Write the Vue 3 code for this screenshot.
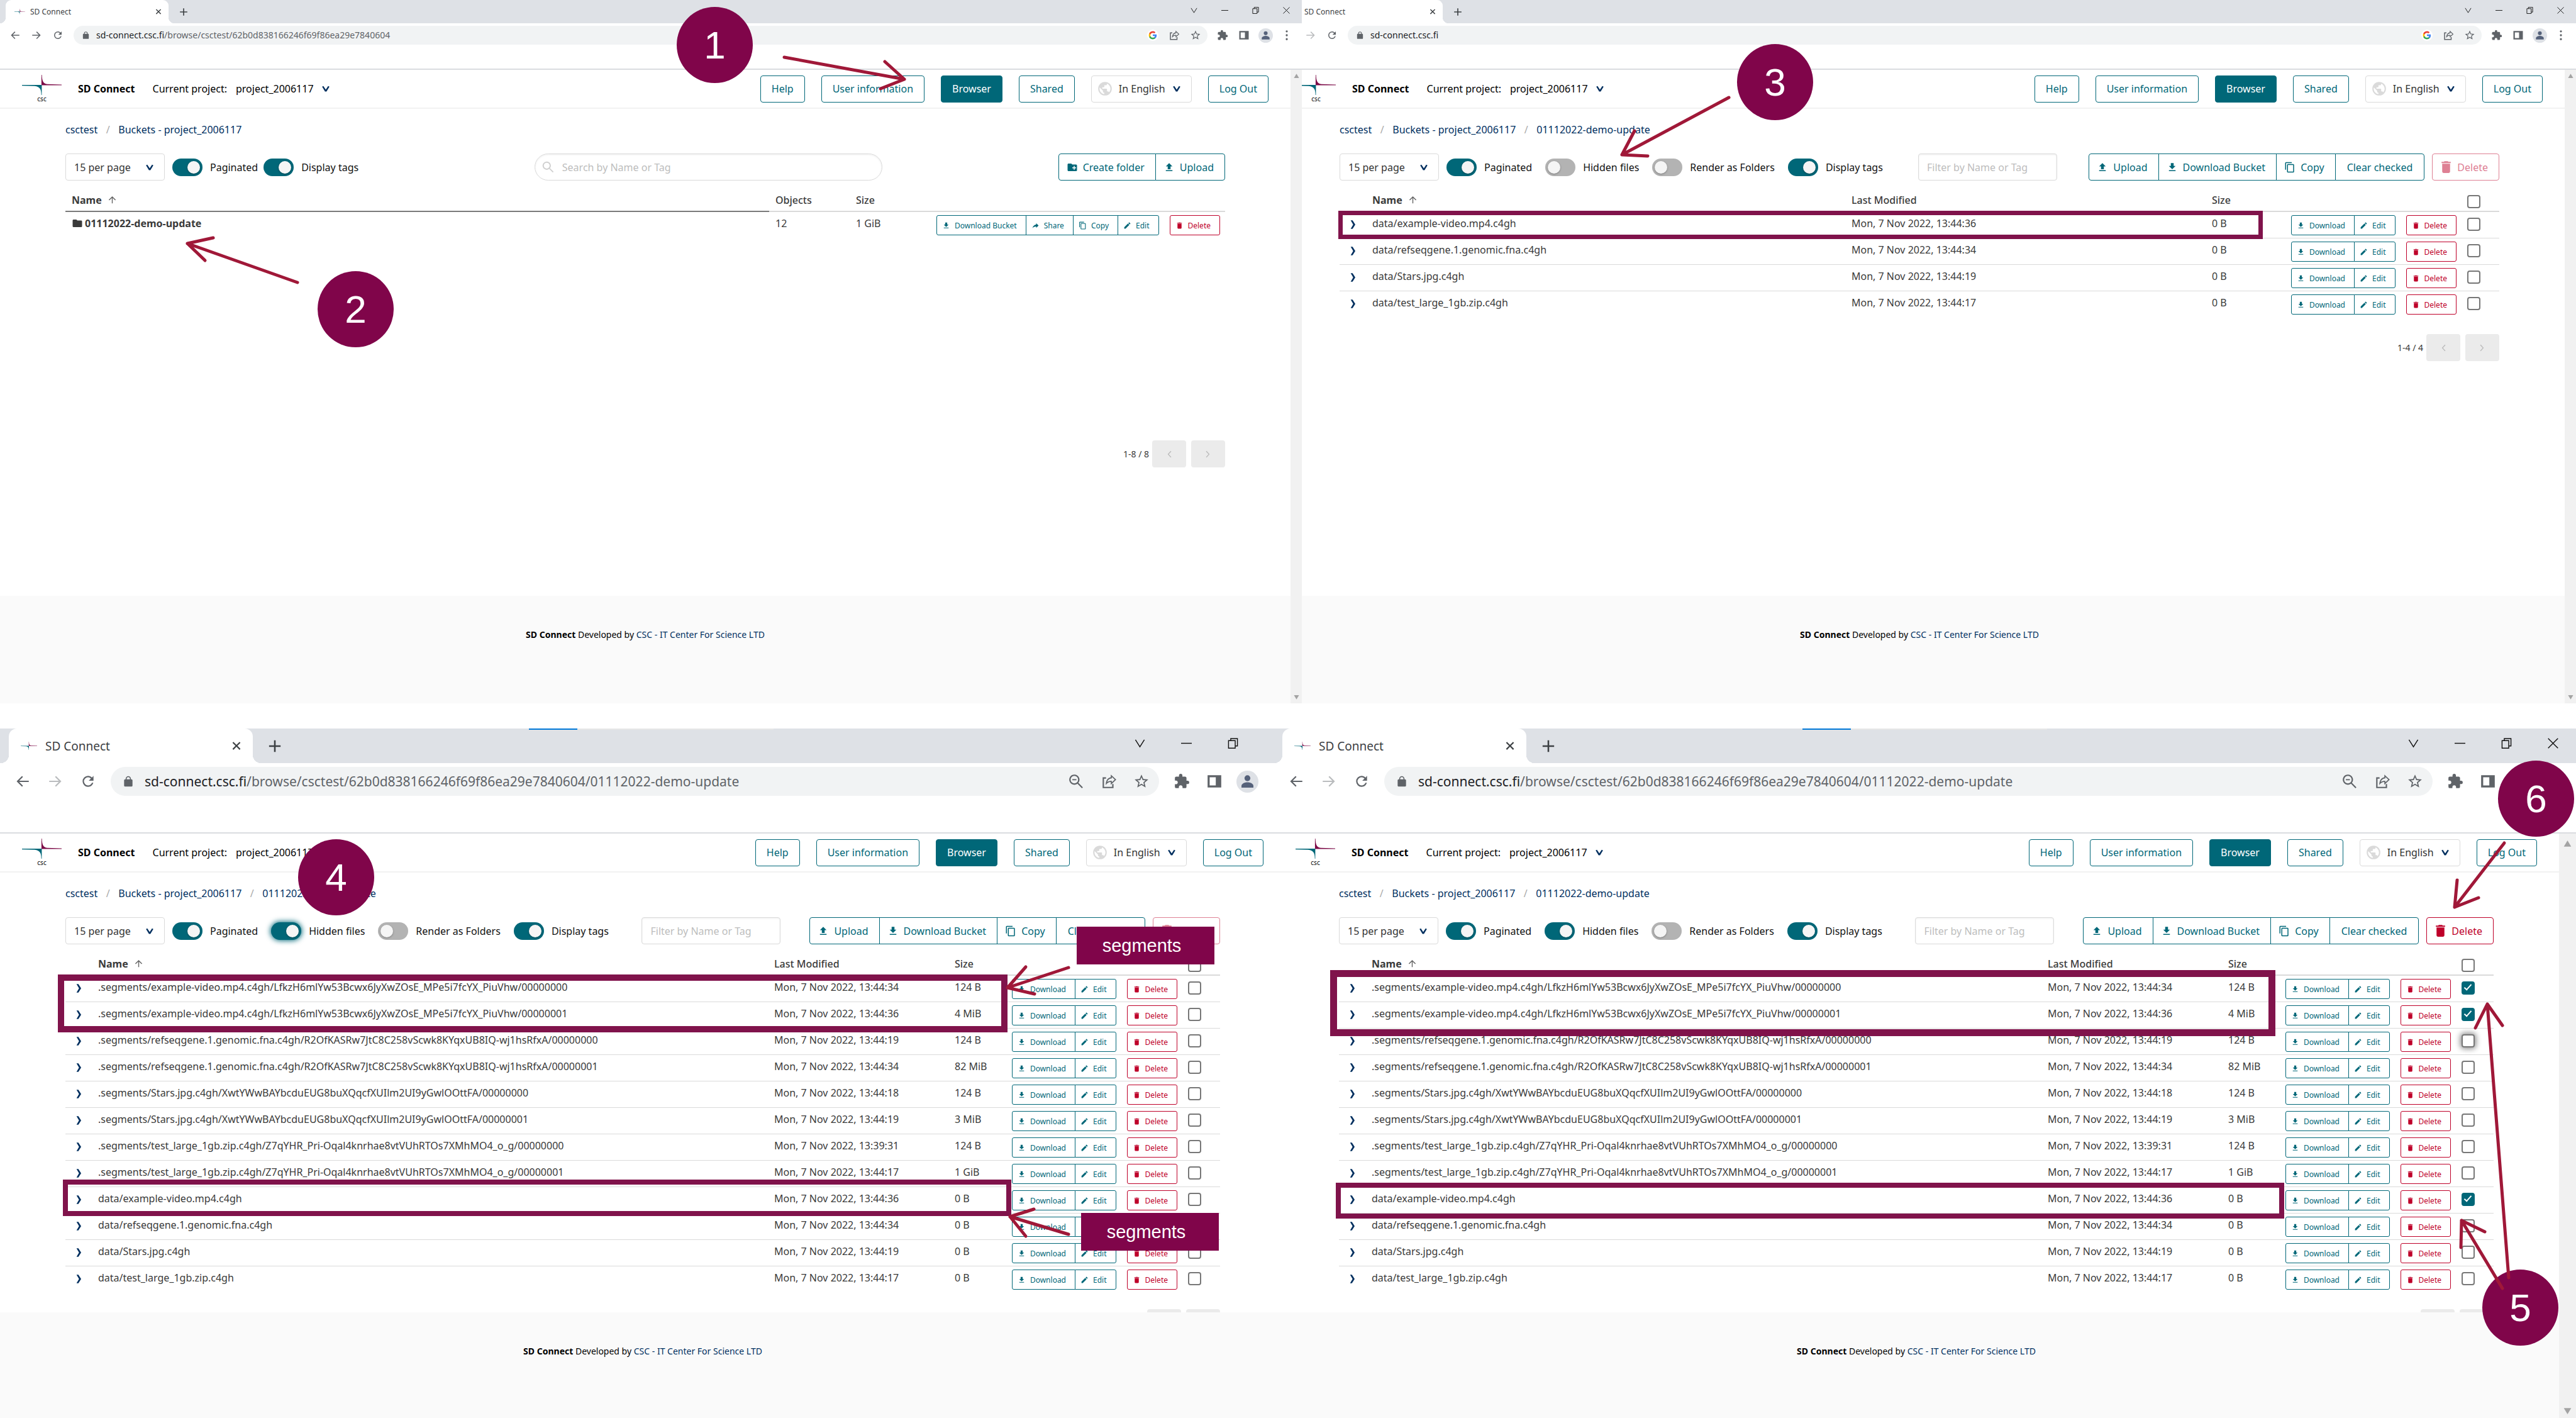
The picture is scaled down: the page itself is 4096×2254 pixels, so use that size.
<script setup>
import { h } from 'vue'

const paths = {
  upload: 'M9,16V10H5L12,3L19,10H15V16H9M5,20V18H19V20H5Z',
  download: 'M5,20H19V18H5M19,9H15V3H9V9H5L12,16L19,9Z',
  folderPlus: 'M10,4L12,6H20A2,2 0 0,1 22,8V18A2,2 0 0,1 20,20H4C2.89,20 2,19.1 2,18V6C2,4.89 2.89,4 4,4H10M15,9V12H12V14H15V17H17V14H20V12H17V9H15Z',
  folder: 'M10,4H4C2.89,4 2,4.89 2,6V18A2,2 0 0,0 4,20H20A2,2 0 0,0 22,18V8C22,6.89 21.1,6 20,6H12L10,4Z',
  copy: 'M19,21H8V7H19M19,5H8A2,2 0 0,0 6,7V21A2,2 0 0,0 8,23H19A2,2 0 0,0 21,21V7A2,2 0 0,0 19,5M16,1H4A2,2 0 0,0 2,3V17H4V3H16V1Z',
  share: 'M21,12L14,5V9C7,10 4,15 3,20C5.5,16.5 9,14.9 14,14.9V19L21,12Z',
  edit: 'M20.71,7.04C21.1,6.65 21.1,6 20.71,5.63L18.37,3.29C18,2.9 17.35,2.9 16.96,3.29L15.12,5.12L18.87,8.87M3,17.25V21H6.75L17.81,9.93L14.06,6.18L3,17.25Z',
  trash: 'M19,4H15.5L14.5,3H9.5L8.5,4H5V6H19M6,19A2,2 0 0,0 8,21H16A2,2 0 0,0 18,19V7H6V19Z',
  earth: 'M17.9,17.39C17.64,16.59 16.89,16 16,16H15V13A1,1 0 0,0 14,12H8V10H10A1,1 0 0,0 11,9V7H13A2,2 0 0,0 15,5V4.59C17.93,5.77 20,8.64 20,12C20,14.08 19.2,15.97 17.9,17.39M11,19.93C7.05,19.44 4,16.08 4,12C4,11.38 4.08,10.78 4.21,10.21L9,15V16A2,2 0 0,0 11,18M12,2A10,10 0 0,0 2,12A10,10 0 0,0 12,22A10,10 0 0,0 22,12A10,10 0 0,0 12,2Z',
  arrowUp: 'M13,20H11V8L5.5,13.5L4.08,12.08L12,4.16L19.92,12.08L18.5,13.5L13,8V20Z',
  puzzle: 'M20.5,11H19V7C19,5.89 18.1,5 17,5H13V3.5A2.5,2.5 0 0,0 10.5,1A2.5,2.5 0 0,0 8,3.5V5H4A2,2 0 0,0 2,7V10.8H3.5C5,10.8 6.2,12 6.2,13.5C6.2,15 5,16.2 3.5,16.2H2V20A2,2 0 0,0 4,22H7.8V20.5C7.8,19 9,17.8 10.5,17.8C12,17.8 13.2,19 13.2,20.5V22H17A2,2 0 0,0 19,20V16H20.5A2.5,2.5 0 0,0 23,13.5A2.5,2.5 0 0,0 20.5,11Z',
  star: 'M12,15.39L8.24,17.66L9.23,13.38L5.91,10.5L10.29,10.13L12,6.09L13.71,10.13L18.09,10.5L14.77,13.38L15.76,17.66M22,9.24L14.81,8.63L12,2L9.19,8.63L2,9.24L7.45,13.97L5.82,21L12,17.27L18.18,21L16.54,13.97L22,9.24Z',
  lock: 'M18,8H17V7A5,5 0 0,0 7,7V8H6A2,2 0 0,0 4,10V20A2,2 0 0,0 6,22H18A2,2 0 0,0 20,20V10A2,2 0 0,0 18,8M8.9,8V7A3.1,3.1 0 0,1 15.1,7V8Z',
  reload: 'M17.65,6.35C16.2,4.9 14.21,4 12,4A8,8 0 0,0 4,12A8,8 0 0,0 12,20C15.73,20 18.84,17.45 19.73,14H17.65C16.83,16.33 14.61,18 12,18A6,6 0 0,1 6,12A6,6 0 0,1 12,6C13.66,6 15.14,6.69 16.22,7.78L13,11H20V4L17.65,6.35Z',
  back: 'M21,11V13H7L12.5,18.5L11.08,19.92L3.16,12L11.08,4.08L12.5,5.5L7,11H21Z',
  forward: 'M3,11V13H17L11.5,18.5L12.92,19.92L20.84,12L12.92,4.08L11.5,5.5L17,11H3Z',
  sidePanel: 'M2,3H22V21H2ZM5,6V18H14V6Z',
  dots: 'M12,1.5A2.2,2.2 0 1,0 12,5.9A2.2,2.2 0 1,0 12,1.5ZM12,9.8A2.2,2.2 0 1,0 12,14.2A2.2,2.2 0 1,0 12,9.8ZM12,18.1A2.2,2.2 0 1,0 12,22.5A2.2,2.2 0 1,0 12,18.1Z',
  shareOut: 'M3,6H8V8H5V20H17V16H19V22H3ZM15,2L23,9.5L15,17V13C12,13 9.5,14.5 7.5,17.5C7.5,11 10.5,6.5 15,6ZM16.5,5.5V7.5C13,7.8 10.5,9.8 9.6,12.9C11.5,11.7 13.8,11.3 16.5,11.4V13.4L20.7,9.5Z',
  chevronDown: 'M2,6.5L5.5,4.5L12,14.5L18.5,4.5L22,6.5L14,19.5H10Z',
  chevronRight: 'M7,2H11.5L18,12L11.5,22H7L13,12Z',
  chevronLeft: 'M16,3L18,4.5L11,12L18,19.5L16,21L8,12Z',
  chevronNext: 'M8,3L6,4.5L13,12L6,19.5L8,21L16,12Z',
  close: 'M5.2,3L12,9.8L18.8,3L21,5.2L14.2,12L21,18.8L18.8,21L12,14.2L5.2,21L3,18.8L9.8,12L3,5.2Z',
  plus: 'M10.6,2H13.4V10.6H22V13.4H13.4V22H10.6V13.4H2V10.6H10.6Z',
  search: 'M9.5,2A7.5,7.5 0 0,1 15.4,14.1L22,20.7L20.6,22.1L14,15.5A7.5,7.5 0 1,1 9.5,2ZM9.5,4.2A5.3,5.3 0 1,0 9.5,14.8A5.3,5.3 0 1,0 9.5,4.2Z',
  zoomOut: 'M9.5,2A7.5,7.5 0 0,1 15.4,14.1L22,20.7L20.6,22.1L14,15.5A7.5,7.5 0 1,1 9.5,2ZM9.5,4A5.5,5.5 0 1,0 9.5,15A5.5,5.5 0 1,0 9.5,4ZM6.5,8.7H12.5V10.3H6.5Z',
}

const Icon = (props) =>
  h('svg', { viewBox: '0 0 24 24', 'aria-hidden': 'true', class: 'ic' }, [
    h('path', { d: paths[props.name], 'fill-rule': 'evenodd' }),
  ])
Icon.props = ['name']

const Mark = () =>
  h('svg', { viewBox: '0 0 63 32', 'aria-hidden': 'true' }, [
    h('path', { fill: '#7d0c48', d: 'M30.9 0H31.6C32 9 33 13.6 40 14.8L63 15.4V16.6H30.9Z' }),
    h('path', { fill: '#006778', d: 'M0 16H31.4V32H30.7C30.4 23 29 19 20 17.8L0 17.2Z' }),
  ])

const nov = (t) => 'Mon, 7 Nov 2022, ' + t
const seg = (name, id, n) => `.segments/${name}.c4gh/${id}/0000000${n}`
const dataRows = [
  { name: 'data/example-video.mp4.c4gh', date: nov('13:44:36'), size: '0 B' },
  { name: 'data/refseqgene.1.genomic.fna.c4gh', date: nov('13:44:34'), size: '0 B' },
  { name: 'data/Stars.jpg.c4gh', date: nov('13:44:19'), size: '0 B' },
  { name: 'data/test_large_1gb.zip.c4gh', date: nov('13:44:17'), size: '0 B' },
]
const video = 'LfkzH6mlYw53Bcwx6JyXwZOsE_MPe5i7fcYX_PiuVhw'
const gene = 'R2OfKASRw7JtC8C258vScwk8KYqxUB8IQ-wj1hsRfxA'
const stars = 'XwtYWwBAYbcduEUG8buXQqcfXUIlm2UI9yGwlOOttFA'
const large = 'Z7qYHR_Pri-Oqal4knrhae8vtVUhRTOs7XMhMO4_o_g'
const allRows = [
  { name: seg('example-video.mp4', video, 0), date: nov('13:44:34'), size: '124 B' },
  { name: seg('example-video.mp4', video, 1), date: nov('13:44:36'), size: '4 MiB' },
  { name: seg('refseqgene.1.genomic.fna', gene, 0), date: nov('13:44:19'), size: '124 B' },
  { name: seg('refseqgene.1.genomic.fna', gene, 1), date: nov('13:44:34'), size: '82 MiB' },
  { name: seg('Stars.jpg', stars, 0), date: nov('13:44:18'), size: '124 B' },
  { name: seg('Stars.jpg', stars, 1), date: nov('13:44:19'), size: '3 MiB' },
  { name: seg('test_large_1gb.zip', large, 0), date: nov('13:39:31'), size: '124 B' },
  { name: seg('test_large_1gb.zip', large, 1), date: nov('13:44:17'), size: '1 GiB' },
  ...dataRows,
]

const bucketPath = '/browse/csctest/62b0d838166246f69f86ea29e7840604'
const folder = '01112022-demo-update'
const toggles = (hidden, focus) => [
  { label: 'Paginated', on: true },
  { label: 'Hidden files', on: hidden, focus },
  { label: 'Render as Folders', on: false },
  { label: 'Display tags', on: true },
]

const strips = [
  {
    kind: 'upper',
    panes: [
      { id: 'buckets', path: bucketPath, forward: true, toggles: [{ label: 'Paginated', on: true }, { label: 'Display tags', on: true }], pages: '1-8 / 8' },
      { id: 'files', path: '', folder, toggles: toggles(false), rows: dataRows, checked: [], pages: '1-4 / 4' },
    ],
  },
  {
    kind: 'lower',
    panes: [
      { id: 'hidden', big: true, path: `${bucketPath}/${folder}`, folder, toggles: toggles(true, true), rows: allRows, checked: [], pages: '' },
      { id: 'selected', big: true, path: `${bucketPath}/${folder}`, folder, toggles: toggles(true), rows: allRows, checked: [0, 1, 8], focusRow: 2, canDelete: true, pages: '' },
    ],
  },
]

const steps = [
  { n: 1, x: 1136, y: 71 },
  { n: 2, x: 565, y: 491 },
  { n: 3, x: 2822, y: 130 },
  { n: 4, x: 534, y: 1394 },
  { n: 5, x: 4007, y: 2078 },
  { n: 6, x: 4032, y: 1269 },
]
const frames = [
  { x: 2128, y: 335, w: 1470, h: 45, b: 7 },
  { x: 92, y: 1549, w: 1510, h: 92, b: 10 },
  { x: 100, y: 1875, w: 1508, h: 58, b: 8 },
  { x: 2115, y: 1542, w: 1503, h: 105, b: 11 },
  { x: 2124, y: 1880, w: 1508, h: 57, b: 8 },
]
const tags = [
  { x: 1712, y: 1473 },
  { x: 1719, y: 1928 },
]
const arrows = [
  'M1247 91L1438 126M1407 98L1438 126L1400 141',
  'M473 449L298 387M339 378L298 387L326 414',
  'M2749 155L2579 246M2599 208L2579 246L2620 248',
  'M1699 1538L1602 1570M1631 1537L1602 1570L1645 1580',
  'M1699 1962L1606 1934M1644 1922L1606 1934L1631 1965',
  'M3989 2031L3955 1596M3936 1634L3955 1596L3979 1630',
  'M3979 2048L3914 1940M3913 1983L3914 1940L3951 1958',
  'M3982 1340L3903 1442M3907 1399L3903 1442L3941 1427',
]
</script>

<template>
  <main class="board">
    <div v-for="strip in strips" :key="strip.kind" class="strip" :class="strip.kind">
      <section v-for="p in strip.panes" :key="p.id" class="pane" :class="[p.id, { big: p.big }]">
        <div class="browser">
          <div class="tabs">
            <div class="tab">
              <span class="favicon"><Mark class="fav-mark" /></span>
              <span class="tab-title">SD Connect</span>
              <button class="tab-close" aria-label="Close tab"><Icon name="close" /></button>
            </div>
            <button class="tab-new" aria-label="New tab"><Icon name="plus" /></button>
            <div class="window-controls">
              <button aria-label="Search tabs"><svg viewBox="0 0 12 12"><path d="M1 2L6 10L11 2" /></svg></button>
              <button aria-label="Minimize"><svg viewBox="0 0 12 12"><path d="M0 6H12" /></svg></button>
              <button aria-label="Restore"><svg viewBox="0 0 12 12"><path d="M1 3H8.5V11.5H1ZM3.5 3V.7H11V9H8.5" /></svg></button>
              <button aria-label="Close"><svg viewBox="0 0 12 12"><path d="M.5 .5L11.5 11.5M11.5 .5L.5 11.5" /></svg></button>
            </div>
          </div>

          <div class="navbar">
            <button class="nav" aria-label="Back"><Icon name="back" /></button>
            <button class="nav" :class="{ faint: !p.forward }" aria-label="Forward"><Icon name="forward" /></button>
            <button class="nav" aria-label="Reload"><Icon name="reload" /></button>
            <div class="url">
              <Icon name="lock" class="lock" />
              <span class="address">sd-connect.csc.fi<span class="path">{{ p.path }}</span></span>
              <button v-if="p.big" class="nav" aria-label="Zoom"><Icon name="zoomOut" /></button>
              <button v-else class="nav" aria-label="Google">
                <svg class="ic google" viewBox="0 0 24 24">
                  <path fill="#4285F4" d="M22.56 12.25c0-.78-.07-1.53-.2-2.25H12v4.26h5.92c-.26 1.37-1.04 2.53-2.21 3.31v2.77h3.57c2.08-1.92 3.28-4.74 3.28-8.09z" />
                  <path fill="#34A853" d="M12 23c2.97 0 5.46-.98 7.28-2.66l-3.57-2.77c-.98.66-2.23 1.06-3.71 1.06-2.86 0-5.29-1.93-6.16-4.53H2.18v2.84C3.99 20.53 7.7 23 12 23z" />
                  <path fill="#FBBC05" d="M5.84 14.09c-.22-.66-.35-1.36-.35-2.09s.13-1.43.35-2.09V7.07H2.18C1.43 8.55 1 10.22 1 12s.43 3.45 1.18 4.93l3.66-2.84z" />
                  <path fill="#EA4335" d="M12 5.38c1.62 0 3.06.56 4.21 1.64l3.15-3.15C17.45 2.09 14.97 1 12 1 7.7 1 3.99 3.47 2.18 7.07l3.66 2.84c.87-2.6 3.3-4.53 6.16-4.53z" />
                </svg>
              </button>
              <button class="nav" aria-label="Share page"><Icon name="shareOut" /></button>
              <button class="nav" aria-label="Bookmark"><Icon name="star" /></button>
            </div>
            <button class="nav" aria-label="Extensions"><Icon name="puzzle" /></button>
            <button class="nav" aria-label="Side panel"><Icon name="sidePanel" /></button>
            <button class="nav" aria-label="Profile">
              <svg class="avatar" viewBox="0 0 24 24">
                <circle cx="12" cy="12" r="12" fill="#dee1e6" />
                <circle cx="12" cy="8.2" r="3.2" fill="#55617a" />
                <path d="M5.5 18.5V16.5C5.5 13.8 9.5 12.6 12 12.6S18.500 13.8 18.500 16.5V18.500Z" fill="#55617a" />
              </svg>
            </button>
            <button class="nav" aria-label="Menu"><Icon name="dots" /></button>
          </div>

          <div class="viewport">
            <div class="page">
              <header class="header">
                <div class="logo"><Mark class="mark" /><span>csc</span></div>
                <strong class="title">SD Connect</strong>
                <label class="current" :for="p.id + '-project'">Current project:</label>
                <select :id="p.id + '-project'" class="project"><option>project_2006117</option></select>
                <Icon name="chevronDown" class="chev" />
                <nav class="menu">
                  <button class="btn">Help</button>
                  <button class="btn">User information</button>
                  <button class="btn solid">Browser</button>
                  <button class="btn">Shared</button>
                  <div class="lang">
                    <Icon name="earth" class="earth" />
                    <select aria-label="Language"><option>In English</option></select>
                    <Icon name="chevronDown" class="chev" />
                  </div>
                  <button class="btn">Log Out</button>
                </nav>
              </header>

              <div class="content">
                <nav class="crumbs" aria-label="Breadcrumb">
                  <a href="#">csctest</a><i>/</i><a href="#">Buckets - project_2006117</a>
                  <template v-if="p.folder"><i>/</i><a href="#">{{ p.folder }}</a></template>
                </nav>

                <div class="tools">
                  <div class="options">
                    <div class="perpage">
                      <select aria-label="Items per page"><option>15 per page</option></select>
                      <Icon name="chevronDown" class="chev" />
                    </div>
                    <label v-for="t in p.toggles" :key="t.label" class="toggle">
                      <input type="checkbox" :checked="t.on" :class="{ focus: t.focus }" />
                      <span>{{ t.label }}</span>
                    </label>
                  </div>
                  <template v-if="p.rows">
                    <input class="filter" type="text" placeholder="Filter by Name or Tag" aria-label="Filter by Name or Tag" />
                    <div class="actions">
                      <div class="group">
                        <button class="btn"><Icon name="upload" />Upload</button>
                        <button class="btn"><Icon name="download" />Download Bucket</button>
                        <button class="btn"><Icon name="copy" />Copy</button>
                        <button class="btn plain">Clear checked</button>
                      </div>
                      <button class="btn danger" :disabled="!p.canDelete"><Icon name="trash" />Delete</button>
                    </div>
                  </template>
                  <template v-else>
                    <div class="search">
                      <Icon name="search" />
                      <input type="search" placeholder="Search by Name or Tag" aria-label="Search by Name or Tag" />
                    </div>
                    <div class="group">
                      <button class="btn"><Icon name="folderPlus" />Create folder</button>
                      <button class="btn"><Icon name="upload" />Upload</button>
                    </div>
                  </template>
                </div>

                <div class="listing">
                  <table v-if="p.rows" class="files">
                    <colgroup>
                      <col class="c-open" /><col /><col class="c-date" /><col class="c-size" /><col class="c-act" /><col class="c-check" />
                    </colgroup>
                    <thead>
                      <tr>
                        <th></th>
                        <th class="sorted">Name <Icon name="arrowUp" /></th>
                        <th>Last Modified</th>
                        <th>Size</th>
                        <th></th>
                        <th class="check"><input type="checkbox" aria-label="Check all" /></th>
                      </tr>
                    </thead>
                    <tbody>
                      <tr v-for="(r, i) in p.rows" :key="r.name">
                        <td class="open"><Icon name="chevronRight" /></td>
                        <td>{{ r.name }}</td>
                        <td>{{ r.date }}</td>
                        <td>{{ r.size }}</td>
                        <td class="act">
                          <div class="rowbtns">
                            <div class="group small">
                              <button class="btn"><Icon name="download" />Download</button>
                              <button class="btn"><Icon name="edit" />Edit</button>
                            </div>
                            <button class="btn danger small"><Icon name="trash" />Delete</button>
                          </div>
                        </td>
                        <td class="check">
                          <input type="checkbox" :checked="p.checked.includes(i)" :class="{ focus: p.focusRow === i }" :aria-label="'Check ' + r.name" />
                        </td>
                      </tr>
                    </tbody>
                  </table>

                  <table v-else class="bucket-table">
                    <colgroup><col /><col class="c-count" /><col class="c-size" /><col class="c-act" /></colgroup>
                    <thead>
                      <tr>
                        <th class="sorted">Name <Icon name="arrowUp" /></th>
                        <th>Objects</th>
                        <th>Size</th>
                        <th></th>
                      </tr>
                    </thead>
                    <tbody>
                      <tr>
                        <td class="bucket"><Icon name="folder" />{{ folder }}</td>
                        <td>12</td>
                        <td>1 GiB</td>
                        <td class="act">
                          <div class="rowbtns">
                            <div class="group small">
                              <button class="btn"><Icon name="download" />Download Bucket</button>
                              <button class="btn"><Icon name="share" />Share</button>
                              <button class="btn"><Icon name="copy" />Copy</button>
                              <button class="btn"><Icon name="edit" />Edit</button>
                            </div>
                            <button class="btn danger small"><Icon name="trash" />Delete</button>
                          </div>
                        </td>
                      </tr>
                    </tbody>
                  </table>
                </div>

                <div class="pager">
                  <span>{{ p.pages }}</span>
                  <button disabled aria-label="Previous page"><Icon name="chevronLeft" /></button>
                  <button disabled aria-label="Next page"><Icon name="chevronNext" /></button>
                </div>
              </div>

              <footer class="footer">
                <b>SD Connect</b> Developed by <a href="#">CSC - IT Center For Science LTD</a>
              </footer>
            </div>
            <div class="scrollbar">
              <svg viewBox="0 0 10 10"><path d="M5 1.500L9.500 9H.5Z" /></svg>
              <svg viewBox="0 0 10 10"><path d="M5 8.500L.5 1H9.500Z" /></svg>
            </div>
          </div>
        </div>
      </section>
    </div>

    <div class="notes">
      <span
        v-for="(f, i) in frames"
        :key="'f' + i"
        class="frame"
        :style="{ left: f.x + 'px', top: f.y + 'px', width: f.w + 'px', height: f.h + 'px', borderWidth: f.b + 'px' }"
      ></span>
      <span v-for="(t, i) in tags" :key="'t' + i" class="tag" :style="{ left: t.x + 'px', top: t.y + 'px' }">segments</span>
      <span v-for="s in steps" :key="s.n" class="step" :style="{ left: s.x + 'px', top: s.y + 'px' }">{{ s.n }}</span>
      <svg class="arrows" aria-hidden="true"><path v-for="a in arrows" :key="a" :d="a" /></svg>
    </div>
  </main>
</template>

<style>
body {
  margin: 0;
  background: #fff;
}
</style>

<style scoped>
.board {
  position: relative;
  display: flex;
  flex-direction: column;
  gap: 40px;
  min-height: 100vh;
  overflow: hidden;
  background: #fff;
  color: #3a3a3a;
  font: 16px/24px "Noto Sans", "Open Sans", sans-serif;
}
.board *,
.board *::before,
.board *::after {
  box-sizing: border-box;
}
button,
select,
input {
  font: inherit;
  color: inherit;
  margin: 0;
}
button {
  background: none;
  border: 0;
  padding: 0;
  white-space: nowrap;
}
select {
  appearance: none;
  border: 0;
  padding: 0;
  background: none;
}
.ic {
  display: block;
  flex: none;
  width: 18px;
  height: 18px;
  fill: currentColor;
}
.strip {
  display: grid;
}
.upper {
  grid-template-columns: 2070fr 2026fr;
}
.lower {
  grid-template-columns: 2025fr 2071fr;
  flex: 1;
}
.pane {
  display: flex;
  min-width: 0;
  overflow: hidden;
}
.browser {
  flex: 1;
  min-width: 0;
  display: flex;
  flex-direction: column;
}
.files .browser {
  margin-left: -44px;
}
.hidden .browser {
  margin-right: -46px;
}

/* browser chrome */
.tabs {
  display: flex;
  height: 37px;
  padding-left: 9px;
  background: #dee1e6;
  color: #3c4043;
  font-size: 12px;
}
.tab {
  position: relative;
  display: flex;
  align-items: center;
  width: 259px;
  padding: 0 8px 0 14px;
  border-radius: 9px 9px 0 0;
  background: #fff;
}
.tab::before,
.tab::after {
  content: "";
  position: absolute;
  bottom: 0;
  width: 9px;
  height: 9px;
}
.tab::before {
  right: 100%;
  background: radial-gradient(circle at 0 0, transparent 9px, #fff 9px);
}
.tab::after {
  left: 100%;
  background: radial-gradient(circle at 100% 0, transparent 9px, #fff 9px);
}
.favicon {
  width: 17px;
}
.fav-mark {
  display: block;
  width: 100%;
}
.tab-title {
  flex: 1;
  margin-left: 8px;
}
.tab-close .ic {
  width: 16px;
  height: 11px;
}
.tab-new {
  width: 28px;
  margin-left: 10px;
}
.tab-new .ic {
  width: 100%;
  height: 14px;
}
.window-controls {
  display: flex;
  margin-left: auto;
  padding-bottom: 5px;
}
.window-controls button {
  width: 49px;
  display: flex;
  align-items: center;
  justify-content: center;
}
.window-controls svg {
  width: 11px;
  height: 11px;
  fill: none;
  stroke: #111;
  stroke-width: 1;
}
.navbar {
  display: flex;
  align-items: flex-start;
  height: 74px;
  padding: 4px 7px 0;
  border-bottom: 2px solid #dadce0;
  font-size: 14px;
  color: #5f6368;
}
.nav {
  display: flex;
  align-items: center;
  justify-content: center;
  width: 34px;
  height: 30px;
}
.nav.faint {
  color: #babcbe;
}
.nav .google {
  width: 18px;
  height: 18px;
  padding: 2px;
  border-radius: 50%;
  background: #fff;
}
.avatar {
  width: 23px;
  height: 23px;
}
.url {
  flex: 1;
  display: flex;
  align-items: center;
  height: 30px;
  margin: 0 7px 0 8px;
  padding: 0 2px 0 12px;
  border-radius: 15px;
  background: #f1f3f4;
}
.lock {
  width: 15px;
  height: 14px;
}
.address {
  flex: 1;
  margin-left: 9px;
  color: #202124;
}
.path {
  color: #5f6368;
}
.big .tabs {
  height: 55px;
  padding-left: 14px;
  font-size: 19px;
  background: linear-gradient(to right, transparent 841px, #0078d7 841px 918px, #e6e6e6 918px 1230px, transparent 1230px) top / 100% 2px no-repeat, #dee1e6;
}
.big .tab {
  width: 388px;
  padding: 0 14px 0 19px;
  border-radius: 13px 13px 0 0;
}
.big .tab::before,
.big .tab::after {
  width: 13px;
  height: 13px;
}
.big .tab::before {
  background: radial-gradient(circle at 0 0, transparent 13px, #fff 13px);
}
.big .tab::after {
  background: radial-gradient(circle at 100% 0, transparent 13px, #fff 13px);
}
.big .favicon {
  width: 26px;
}
.big .tab-title {
  margin-left: 13px;
}
.big .tab-close .ic {
  width: 24px;
  height: 17px;
}
.big .tab-new {
  width: 40px;
  margin-left: 15px;
}
.big .tab-new .ic {
  height: 22px;
}
.big .window-controls {
  padding-bottom: 9px;
}
.big .window-controls button {
  width: 74px;
}
.big .window-controls svg {
  width: 17px;
  height: 17px;
}
.big .navbar {
  height: 112px;
  padding: 6px 10px 0;
  font-size: 21px;
}
.big .nav {
  width: 52px;
  height: 46px;
}
.big .nav .ic {
  width: 26px;
  height: 26px;
}
.big .avatar {
  width: 35px;
  height: 35px;
}
.big .url {
  height: 46px;
  margin: 0 10px;
  padding: 0 2px 0 17px;
  border-radius: 23px;
}
.big .lock {
  width: 22px;
  height: 20px;
}
.big .address {
  margin-left: 15px;
}

/* page */
.viewport {
  flex: 1;
  display: flex;
}
.page {
  flex: 1;
  min-width: 0;
  display: flex;
  flex-direction: column;
}
.scrollbar {
  display: flex;
  flex-direction: column;
  justify-content: space-between;
  align-items: center;
  width: 18px;
  padding: 5px 0;
  background: #f1f1f1;
}
.scrollbar svg {
  width: 9px;
  height: 9px;
  fill: #a3a3a3;
}
.big .scrollbar {
  width: 27px;
  padding: 9px 0 4px;
}
.big .scrollbar svg {
  width: 13px;
  height: 13px;
}
.header {
  display: flex;
  align-items: center;
  height: 62px;
  padding: 0 35px;
  border-bottom: 2px solid #f2f2f2;
  color: #000;
}
.logo {
  width: 63px;
  text-align: center;
  font-size: 10px;
  line-height: 12px;
}
.logo span {
  display: block;
}
.mark {
  display: block;
  width: 63px;
  height: 32px;
}
.title {
  margin: 0 28px 0 26px;
}
.project {
  margin: 0 12px 0 14px;
}
.chev {
  width: 14px;
  height: 14px;
  color: #002f5f;
}
.menu {
  display: flex;
  gap: 26px;
  margin-left: auto;
}
.btn {
  display: flex;
  align-items: center;
  height: 43px;
  padding: 0 17px;
  border: 1px solid #006778;
  border-radius: 4px;
  background: #fff;
  color: #006778;
}
.solid {
  background: #006778;
  color: #fff;
}
.lang,
.perpage {
  display: flex;
  align-items: center;
  height: 43px;
  border: 1px solid #dadada;
  border-radius: 4px;
  color: #333;
}
.lang {
  padding: 0 16px 0 8px;
}
.earth {
  width: 26px;
  height: 26px;
  margin-right: 9px;
  color: #dadada;
}
.lang .chev {
  margin-left: 11px;
}
.content {
  padding: 21px 104px 0;
}
.upper .content {
  min-height: 774px;
}
.lower .content {
  margin-bottom: -38px;
}
.crumbs {
  display: flex;
  color: #002f5f;
}
.crumbs a {
  color: inherit;
  text-decoration: none;
}
.crumbs i {
  width: 33px;
  text-align: center;
  font-style: normal;
  color: #aaa;
}
.tools {
  display: flex;
  justify-content: space-between;
  align-items: center;
  margin: 26px 0 14px;
}
.options {
  display: flex;
  align-items: center;
  gap: 21px;
}
.buckets .options {
  gap: 9px;
}
.perpage {
  width: 158px;
  padding: 0 16px 0 13px;
  justify-content: space-between;
  margin-right: -9px;
}
.buckets .perpage {
  margin-right: 3px;
}
.toggle {
  display: flex;
  align-items: center;
  gap: 12px;
  color: #111;
  white-space: nowrap;
}
.toggle input {
  appearance: none;
  width: 48px;
  height: 28px;
  padding: 4px;
  border-radius: 14px;
  background: #b3b3b3;
}
.toggle input::before {
  content: "";
  display: block;
  width: 20px;
  height: 20px;
  border-radius: 50%;
  background: #f5f5f5;
  box-shadow: 0 1px 3px rgba(0, 0, 0, 0.3);
}
.toggle input:checked {
  background: #006778;
}
.toggle input:checked::before {
  margin-left: 20px;
}
.toggle input.focus {
  box-shadow: 0 0 8px 1px #006778;
}
.search {
  display: flex;
  align-items: center;
  width: 30%;
  height: 43px;
  padding: 0 10px;
  border: 1px solid #dadada;
  border-radius: 22px;
  box-shadow: inset 0 1px 3px #eee;
  color: #d0d0d0;
}
.search .ic {
  width: 21px;
  height: 21px;
}
.search input {
  flex: 1;
  min-width: 0;
  margin-left: 12px;
  padding: 0;
  border: 0;
  background: none;
}
.filter {
  width: 12%;
  height: 43px;
  margin-left: 6px;
  padding: 0 13px;
  border: 1px solid #dadada;
  border-radius: 4px;
  box-shadow: inset 0 1px 3px #eee;
}
.search input::placeholder,
.filter::placeholder {
  color: #bdbdbd;
  opacity: 1;
}
.actions {
  display: flex;
  gap: 12px;
}
.group {
  display: flex;
}
.group .btn {
  padding: 0 17px 0 12px;
}
.group .btn .ic {
  margin-right: 8px;
}
.group .btn.plain {
  padding: 0 18px;
}
.group .btn + .btn {
  margin-left: -1px;
}
.group .btn:not(:first-child) {
  border-top-left-radius: 0;
  border-bottom-left-radius: 0;
}
.group .btn:not(:last-child) {
  border-top-right-radius: 0;
  border-bottom-right-radius: 0;
}
.danger {
  padding: 0 17px 0 9px;
  border-color: #be0029;
  color: #be0029;
}
.danger .ic {
  width: 25px;
  height: 25px;
  margin-right: 5px;
}
.danger:disabled {
  border-color: #de8094;
  color: #de8094;
}
.small.group .btn,
.small.danger {
  height: 32px;
  padding: 0 14px 0 8px;
  border-radius: 3px;
  font-size: 12px;
}
.small.group .btn:not(:first-child) {
  border-radius: 0 3px 3px 0;
}
.small.group .btn:not(:last-child) {
  border-top-right-radius: 0;
  border-bottom-right-radius: 0;
}
.small.group .btn .ic,
.small.danger .ic {
  width: 13px;
  height: 13px;
  margin-right: 7px;
}
.listing {
  min-height: 60px;
}
.buckets .listing {
  min-height: 373px;
}
table {
  width: 100%;
  table-layout: fixed;
  border-collapse: separate;
  border-spacing: 0;
}
th {
  height: 36px;
  padding: 0 0 0 10px;
  border-bottom: 2px solid #dadada;
  text-align: left;
  font-weight: 500;
}
th.sorted {
  font-weight: 700;
}
th .ic {
  display: inline-block;
  width: 17px;
  height: 17px;
  margin-left: 4px;
  vertical-align: -2px;
  color: #666;
}
.bucket-table th.sorted {
  border-color: #7a7a7a;
}
td {
  height: 42px;
  padding: 5px 0 0 10px;
  border-bottom: 1px solid #dadada;
  vertical-align: top;
  line-height: 27px;
  white-space: nowrap;
}
tr:last-child td {
  border-bottom-color: transparent;
}
.c-open {
  width: 42px;
}
.c-check {
  width: 51px;
}
.c-act {
  width: 281px;
}
.files .c-date {
  width: 573px;
}
.files .c-size {
  width: 135px;
}
.lower .files .c-date {
  width: 287px;
}
.lower .files .c-size {
  width: 100px;
}
.bucket-table .c-count {
  width: 128px;
}
.bucket-table .c-size {
  width: 129px;
}
.bucket-table .c-act {
  width: 468px;
}
.open .ic {
  width: 16px;
  height: 16px;
  margin: 7px 0 0 3px;
  color: #002f5f;
}
.bucket {
  font-weight: 700;
}
.bucket .ic {
  display: inline-block;
  width: 18px;
  height: 18px;
  margin-right: 3px;
  vertical-align: -3px;
}
td.act {
  padding: 5px 17px 0 0;
}
.bucket-table td.act {
  padding-right: 8px;
}
.rowbtns {
  display: flex;
  justify-content: flex-end;
  gap: 17px;
}
.check {
  padding-left: 0;
}
th.check {
  padding-top: 4px;
}
td.check {
  padding-top: 9px;
}
.check input {
  appearance: none;
  display: block;
  width: 21px;
  height: 21px;
  border: 2px solid #777;
  border-radius: 4px;
  background: #fff;
}
.check input:checked {
  border-color: #006778;
  background: #006778;
}
.check input:checked::before {
  content: "";
  display: block;
  width: 6px;
  height: 12px;
  margin: 0 0 0 5px;
  border: solid #fff;
  border-width: 0 2px 2px 0;
  transform: rotate(42deg);
}
.check input.focus {
  box-shadow: 0 0 8px 2px #888;
}
.pager {
  display: flex;
  justify-content: flex-end;
  align-items: center;
  gap: 8px;
  margin-top: 26px;
  font-size: 14px;
}
.pager span {
  margin-right: -3px;
}
.pager button {
  display: flex;
  align-items: center;
  justify-content: center;
  width: 54px;
  height: 43px;
  border-radius: 4px;
  background: #ebebeb;
  color: #bbb;
}
.pager .ic {
  width: 14px;
  height: 14px;
}
.footer {
  position: relative;
  flex: 1;
  min-height: 168px;
  padding-top: 50px;
  background: #fafafa;
  text-align: center;
  color: #000;
  font-size: 14px;
}
.upper .footer {
  min-height: 171px;
}
.footer a {
  color: #002f5f;
  text-decoration: none;
}

/* walkthrough annotations laid over the windows */
.notes {
  position: absolute;
  inset: 0;
  overflow: hidden;
  pointer-events: none;
  font-family: "Liberation Sans", Arial, sans-serif;
  color: #fff;
}
.frame {
  position: absolute;
  border: 8px solid #80134b;
}
.tag {
  position: absolute;
  width: 219px;
  height: 60px;
  padding-right: 12px;
  background: #80054a;
  font-size: 29px;
  line-height: 60px;
  text-align: center;
}
.step {
  position: absolute;
  width: 121px;
  height: 121px;
  margin: -60px 0 0 -60px;
  border-radius: 50%;
  background: #80054a;
  font-size: 62px;
  line-height: 121px;
  text-align: center;
}
.arrows {
  position: absolute;
  inset: 0;
  width: 100%;
  height: 100%;
  fill: none;
  stroke: #a01838;
  stroke-width: 5;
  stroke-linecap: round;
  stroke-linejoin: round;
}
</style>
